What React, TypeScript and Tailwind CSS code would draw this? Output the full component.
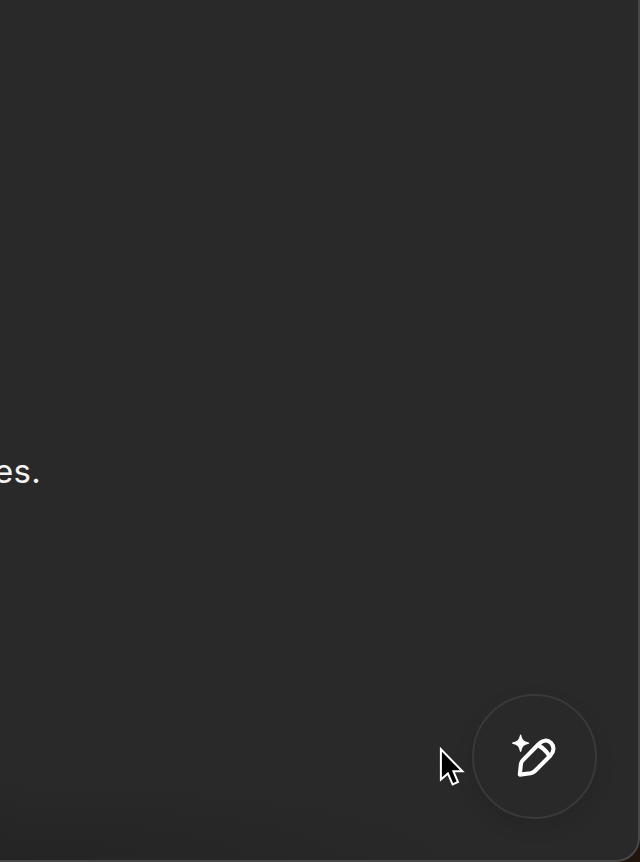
function MagicPencilIcon() {
  return (
    <svg
      className="mr-px mb-[3px]"
      width="46"
      height="46"
      viewBox="0 0 46 46"
      fill="none"
      aria-hidden="true"
    >
      <path
        d="M9.6 3c1.1 5.5 2.8 7.2 8 8.2C12.4 12.2 10.7 13.9 9.6 19.4 8.5 13.9 6.8 12.2 1.6 11.2 6.8 10.2 8.5 8.5 9.6 3Z"
        fill="white"
        stroke="white"
        strokeWidth="1.2"
        strokeLinejoin="round"
      />
      <path
        d="M8.8 42.6 9.9 32.2Q10.1 30 11.7 28.4L27.5 12.3C31.4 8.3 36.4 7.4 39.9 10.7 43.5 14.3 43.2 19.7 39.2 23.7L24.2 38.8Q22.2 40.8 19.5 41.3Z"
        stroke="white"
        strokeWidth="4.1"
        strokeLinejoin="round"
      />
      <path d="M27.4 13.4Q34.2 17.1 38.3 23.9" stroke="white" strokeWidth="4.1" />
    </svg>
  )
}

function Cursor() {
  return (
    <svg
      className="absolute left-[438px] top-[744px]"
      width="32"
      height="46"
      viewBox="0 0 32 46"
      aria-hidden="true"
    >
      <path
        d="M2.9 5.2V35.5L9.9 29.4 14.6 40.4 20 38 15.4 27.3H24.4Z"
        fill="black"
        stroke="white"
        strokeWidth="2"
      />
    </svg>
  )
}

function AssistButton() {
  return (
    <button
      type="button"
      aria-label="Write with AI"
      className="flex h-[125px] w-[125px] items-center justify-center rounded-full border-2 border-[#393939] bg-[#292929] shadow-[0_8px_20px_rgba(0,0,0,0.1)]"
    >
      <MagicPencilIcon />
    </button>
  )
}

export default function App() {
  return (
    <div className="relative h-[862px] w-[640px] overflow-hidden bg-[#21150f] font-['Inter',sans-serif]">
      <main className="flex h-[862px] w-[640px] flex-col justify-between rounded-br-[24px] border-b-2 border-r-2 border-[#484848] bg-[#292929] bg-[radial-gradient(ellipse_480px_80px_at_0%_100%,#242424,#292929)]">
        <p className="pt-[451px] text-[33px] leading-10 tracking-[0.3px] text-[#f4f4f4]">
          <span className="-ml-[6px]">es.</span>
        </p>
        <div className="flex justify-end pb-[41px] pr-[41px]">
          <AssistButton />
        </div>
      </main>
      <Cursor />
    </div>
  )
}
